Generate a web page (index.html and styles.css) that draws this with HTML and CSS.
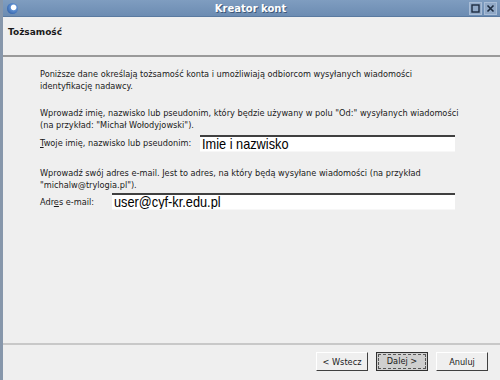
FILE: index.html
```html
<!DOCTYPE html>
<html lang="pl">
  <head>
    <meta charset="UTF-8" />
    <title>Kreator kont</title>
    <link rel="stylesheet" href="styles.css">
  </head>
  <body>
    <div id="window">
      <div class="titlebar">
        <span class="appIcon"></span>
        <span class="title">Kreator kont</span>
        <span class="winButtons">
          <span class="winBtn">
            <svg width="9" height="9" viewBox="0 0 9 9"><rect x="1" y="1" width="7" height="7" fill="none" stroke="#1d2c40" stroke-width="1.4"/></svg>
          </span>
          <span class="winBtn">
            <svg width="9" height="9" viewBox="0 0 9 9"><path d="M1.5 1.5 L7.5 7.5 M7.5 1.5 L1.5 7.5" stroke="#1d2c40" stroke-width="1.6"/></svg>
          </span>
        </span>
      </div>
      <div class="header">
        <p class="pageTitle">Tożsamość</p>
      </div>
      <div class="content">
        <p class="text">Poniższe dane określają tożsamość konta i umożliwiają odbiorcom wysyłanych wiadomości<br>identyfikację nadawcy.</p>
        <p class="text">Wprowadź imię, nazwisko lub pseudonim, który będzie używany w polu "Od:" wysyłanych wiadomości<br>(na przykład: "Michał Wołodyjowski").</p>
        <div class="field">
          <label class="label nameLabel"><u>T</u>woje imię, nazwisko lub pseudonim:</label>
          <div class="input"><span>Imie i nazwisko</span></div>
        </div>
        <p class="text">Wprowadź swój adres e-mail. Jest to adres, na który będą wysyłane wiadomości (na przykład<br>"michalw@trylogia.pl").</p>
        <div class="field mailField">
          <label class="label mailLabel">Adr<u>e</u>s e-mail:</label>
          <div class="input"><span>user@cyf-kr.edu.pl</span></div>
        </div>
      </div>
      <div class="footer">
        <button class="btn">&lt; Wstecz</button>
        <button class="btn default"><span>Dalej &gt;</span></button>
        <button class="btn">Anuluj</button>
      </div>
    </div>
  </body>
</html>
```

FILE: styles.css
```css
* {
  margin: 0;
  padding: 0;
  box-sizing: border-box;
}

html,
body {
  width: 500px;
  height: 380px;
  overflow: hidden;
  background: #efefef;
}

#window {
  width: 500px;
  height: 380px;
  display: flex;
  flex-direction: column;
  border-left: 3px solid #8797ab;
  background: #efefef;
  font-family: "DejaVu Sans", Verdana, sans-serif;
  font-size: 8.2px;
  color: #1a1a1a;
}

.titlebar {
  height: 17px;
  display: flex;
  align-items: center;
  background: linear-gradient(#7f9dc0, #6c8cb2);
  border-bottom: 1px solid #5a7aa0;
  padding: 0 3px 0 4px;
}

.appIcon {
  width: 11px;
  height: 11px;
  border-radius: 50%;
  background: radial-gradient(circle at 60% 40%, #ffffff 0 25%, #5d8ed0 35%, #1f4f9a 100%);
}

.title {
  flex: 1;
  text-align: center;
  color: #fff;
  font-weight: bold;
  font-size: 10px;
  text-shadow: 1px 1px 0 #3e5878;
  padding-left: 14px;
}

.winButtons {
  display: flex;
  gap: 2px;
}

.winBtn {
  width: 13px;
  height: 13px;
  display: flex;
  align-items: center;
  justify-content: center;
  background: #90a8c6;
  border: 1px solid #a9bdd6;
}

.header {
  height: 40px;
  border-bottom: 2px solid #9a9a9a;
  padding: 10px 5px;
}

.pageTitle {
  font-weight: bold;
  font-size: 9px;
}

.content {
  flex: 1;
  padding: 11px 0 0 37px;
}

.text {
  line-height: 12px;
  margin-bottom: 15px;
}

.field {
  display: flex;
  align-items: center;
  margin-top: -11.5px;
  margin-bottom: 15px;
}

.mailField {
  margin-top: -12.5px;
}

.label u {
  text-decoration: underline;
}

.nameLabel {
  width: 160px;
}

.mailLabel {
  width: 72px;
}

.input {
  flex: 1;
  height: 17px;
  margin-right: 45px;
  background: #fff;
  border-top: 2px solid #404040;
  border-bottom: 1px solid #f7f7f7;
  font-family: "Liberation Sans", Arial, sans-serif;
  font-size: 14.5px;
  line-height: 15px;
  padding-left: 2px;
  color: #000;
  overflow: hidden;
}

.input span {
  display: inline-block;
  transform: scaleX(0.88);
  transform-origin: left;
}

.footer {
  height: 37px;
  border-top: 2px solid #c8c8c8;
  display: flex;
  justify-content: flex-end;
  align-items: flex-start;
  gap: 8px;
  padding: 7px 12px 0 0;
}

.btn {
  width: 52px;
  height: 19px;
  font-family: "DejaVu Sans", Verdana, sans-serif;
  font-size: 8.2px;
  color: #1a1a1a;
  background: #efefef;
  border: 1px solid;
  border-color: #ffffff #404040 #404040 #ffffff;
}

.btn.default {
  background: #cfcfcf;
  border: 1px solid #303030;
  padding: 1px;
}

.btn.default span {
  display: block;
  height: 100%;
  line-height: 13px;
  border: 1px dashed #555;
}
```
